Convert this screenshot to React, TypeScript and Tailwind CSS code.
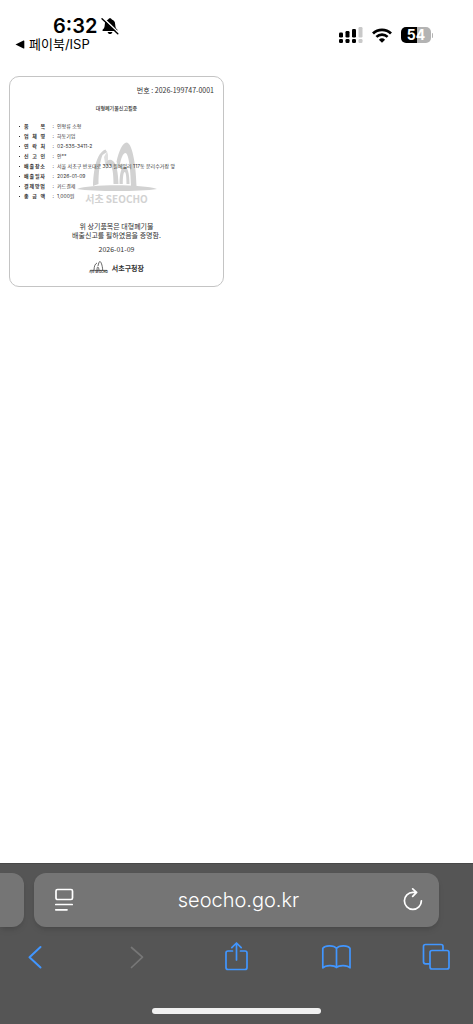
import type { ReactNode } from "react";

const FIELDS = [
  { label: ["품", "목"], value: "인형류 소형" },
  { label: ["업", "체", "명"], value: "하동기업" },
  { label: ["연", "락", "처"], value: "02-535-3411-2" },
  { label: ["신", "고", "인"], value: "안**" },
  { label: ["배", "출", "장", "소"], value: "서울 서초구 반포대로 333 원베일리 117동 분리수거장 앞" },
  { label: ["배", "출", "일", "자"], value: "2026-01-09" },
  { label: ["결", "제", "방", "법"], value: "카드결제" },
  { label: ["총", "금", "액"], value: "1,000원" },
];

function BellOff() {
  return (
    <svg viewBox="0 0 18 18" className="h-[18px] w-[18px]" aria-hidden="true">
      <path
        d="M9 1.200c1 0 1.600.6 1.800 1.400 2.200.6 3.300 2.400 3.400 4.800.1 2.800.8 3.900 2 5 .6.6.3 1.600-.6 1.600H2.400c-.9 0-1.200-1-.6-1.600 1.200-1.100 1.900-2.200 2-5 .1-2.400 1.200-4.200 3.400-4.800C7.400 1.800 8 1.200 9 1.200Z"
        fill="#000"
      />
      <path d="M6.600 15h4.800c-.2 1.300-1.200 2.100-2.400 2.100S6.800 16.300 6.600 15Z" fill="#000" />
      <path d="M2 .8 18 16" stroke="#fff" strokeWidth="1.600" />
      <path d="M1 1.800 16.800 16.800" stroke="#000" strokeWidth="1.400" strokeLinecap="round" />
    </svg>
  );
}

function Signal() {
  return (
    <svg viewBox="0 0 24 18" className="h-[18px] w-6" aria-hidden="true">
      <g fill="#000">
        <rect x="0" y="6.500" width="4" height="5" rx="1.200" />
        <rect x="6.500" y="5" width="4" height="6.500" rx="1.200" />
        <rect x="13" y="3" width="4" height="8.500" rx="1.200" />
        <rect x="0" y="13" width="4" height="4" rx="1.200" />
        <rect x="6.500" y="13" width="4" height="4" rx="1.200" />
        <rect x="13" y="13" width="4" height="4" rx="1.200" />
      </g>
      <g fill="#c9c9c9">
        <rect x="19.500" y="1" width="4" height="10.500" rx="1.200" />
        <rect x="19.500" y="13" width="4" height="4" rx="1.200" />
      </g>
    </svg>
  );
}

function Wifi() {
  return (
    <svg viewBox="0 0 20 15" className="h-[15px] w-5" fill="none" stroke="#000" aria-hidden="true">
      <path d="M1 5.400a13 13 0 0 1 18 0" strokeWidth="2.800" />
      <path d="M4.400 8.900a8 8 0 0 1 11.200 0" strokeWidth="2.600" />
      <path d="M10 14.800 6.900 11.700a4.500 4.500 0 0 1 6.200 0Z" fill="#000" stroke="none" />
    </svg>
  );
}

function Arches({ className }: { className: string }) {
  return (
    <svg viewBox="0 0 82 52" className={className} fill="currentColor" aria-hidden="true">
      <path d="M17 45C17.500 30 20 12 29.500 8.500L31 11 26.500 14C23.500 22 22.500 32 22.500 43Z" />
      <path d="M28 16 31 10.500 32 13.500V26L30 28Z" opacity=".7" />
      <path d="M29.500 24C30.500 19 34 17.500 37 20 41 23.500 42 32 42.500 43H37.500C37.500 33 36.500 25 34 23.500 32.500 22.500 31 23 29.500 24Z" />
      <path d="M40.500 21C42.500 11 46.500 1.500 50.500 1.500 56 1.500 60 22 60.500 45H55C54.500 27 52.500 12 49.500 12 47 12 45 17 43.500 26Z" />
      <path d="M43.500 43C43.500 32 45.500 25.500 48.500 25.500S53.500 32 53.500 43H50.500C50.500 36 50 31 48.700 31S46.800 36 46.800 43Z" />
      <path d="M1 48C14 43 66 43 81 48 64 50.800 18 50.800 1 48Z" />
    </svg>
  );
}

function SealArches() {
  return (
    <svg viewBox="0 0 17 10" className="h-[10px] w-[17px]" fill="none" stroke="#444" aria-hidden="true">
      <path d="M4 9C4.200 5 5 3 7 2M7 9c0-4 1.500-4 2 0M8 5c.6-3 1.200-4.500 2-4.500S12.400 4 12.700 9" strokeWidth=".8" />
      <path d="M0 9.400h17" strokeWidth=".8" />
    </svg>
  );
}

function BarButton({ label, disabled, children }: { label: string; disabled?: boolean; children: ReactNode }) {
  return (
    <button type="button" aria-label={label} disabled={disabled} className="flex h-8 w-[30px] items-center justify-center text-[#4196ff] disabled:text-[#777]">
      <svg viewBox="0 0 30 32" className="h-8 w-[30px] shrink-0" fill="none" stroke="currentColor" strokeWidth="1.700" strokeLinecap="round" strokeLinejoin="round" aria-hidden="true">
        {children}
      </svg>
    </button>
  );
}

function StatusBar() {
  return (
    <header className="flex items-start justify-between pt-4 pr-10 pl-[15px] font-['Inter','Noto_Sans_CJK_KR',sans-serif] text-black">
      <div>
        <div className="flex items-center gap-1 pl-[38px]">
          <span className="text-[20px] leading-5 font-semibold">6:32</span>
          <BellOff />
        </div>
        <a href="#back" className="flex items-center gap-1 text-[13px] leading-4">
          <svg viewBox="0 0 10 9" className="h-[9px] w-[10px]" aria-hidden="true">
            <path d="M.5 4.500 8.500.6q.8-.3.8.5v6.800q0 .8-.8.5Z" />
          </svg>
          페이북/ISP
        </a>
      </div>
      <div className="flex items-center gap-[9px] pt-[10px]">
        <Signal />
        <Wifi />
        <div className="flex items-center gap-px">
          <div className="flex h-4 w-[30px] items-center justify-center rounded-[5px] bg-linear-to-r from-black from-54% to-[#b3b3b3] to-54% text-[14px] leading-4 font-bold text-white">
            54
          </div>
          <div className="h-[5px] w-px rounded-r bg-[#b3b3b3]" />
        </div>
      </div>
    </header>
  );
}

function Certificate() {
  return (
    <article className="relative w-[215px] rounded-[10px] border border-[#c4c4c4] pt-2 pb-3 font-['Noto_Sans_CJK_KR',sans-serif] text-[#333]">
      <div className="absolute inset-x-0 top-16 flex flex-col items-center text-[#d2d2d2]">
        <Arches className="h-[52px] w-[82px]" />
        <span className="text-[10px] leading-3 font-bold">서초 SEOCHO</span>
      </div>
      <div className="relative">
        <p className="pr-[9px] text-right text-[7px] leading-[10px]">번호 : 2026-199747-0001</p>
        <h1 className="mt-2 text-center text-[5px] leading-[10px] font-medium">대형폐기물신고필증</h1>
        <dl className="mt-2 pl-[9px] font-['Inter','Noto_Sans_CJK_KR',sans-serif] text-[5px] leading-[10px]">
          {FIELDS.map(({ label, value }) => (
            <div key={label.join("")} className="flex items-center whitespace-nowrap">
              <span className="mr-1 size-px bg-[#333]" />
              <dt className="flex w-[21px] justify-between font-bold">
                {label.map((part) => (
                  <span key={part}>{part}</span>
                ))}
              </dt>
              <span className="w-3 pr-[3px] text-right">:</span>
              <dd>{value}</dd>
            </div>
          ))}
        </dl>
        <p className="mt-[21px] text-center text-[7px] leading-[9px]">
          위 상기품목은 대형폐기물
          <br />
          배출신고를 필하였음을 증명함.
        </p>
        <p className="mt-1 text-center text-[7px] leading-[10px]">2026-01-09</p>
        <div className="mt-[7px] flex items-center justify-center gap-1">
          <div className="flex flex-col items-center">
            <SealArches />
            <span className="text-[3px] leading-[3px] font-bold">서초 SEOCHO</span>
          </div>
          <strong className="text-[7px] leading-[10px] font-bold">서초구청장</strong>
        </div>
      </div>
    </article>
  );
}

function BrowserBar() {
  return (
    <footer className="border-t border-[#484848] bg-[#555] pt-[9px] pb-[10px] font-['Inter','Noto_Sans_CJK_KR',sans-serif]">
      <div className="flex gap-[10px] pr-[34px]">
        <button type="button" aria-label="이전 탭" className="h-[54px] w-6 rounded-r-xl bg-[#757575] shadow-md" />
        <div className="flex h-[54px] flex-1 items-center justify-between rounded-xl bg-[#757575] pr-4 pl-5 text-white shadow-md">
          <button type="button" aria-label="페이지 메뉴">
            <svg viewBox="0 0 20 24" className="h-6 w-5" fill="none" stroke="currentColor" strokeWidth="1.700" strokeLinecap="round" aria-hidden="true">
              <rect x="2" y="1.500" width="16.500" height="10" rx="1.500" />
              <path d="M1.800 16.500h16.400M1.800 21.800h11.200" />
            </svg>
          </button>
          <button type="button" className="text-[20px] leading-6 font-light">
            seocho.go.kr
          </button>
          <button type="button" aria-label="새로 고침">
            <svg viewBox="0 0 20 24" className="h-6 w-5" fill="none" stroke="currentColor" strokeWidth="1.700" strokeLinecap="round" strokeLinejoin="round" aria-hidden="true">
              <path d="M18.400 12.800a8.500 8.500 0 1 1-8.500-8.500h3.600M9.700.9l3.900 3.500-3.900 4" />
            </svg>
          </button>
        </div>
      </div>
      <nav className="mt-[14px] flex justify-between pr-[22px] pl-5">
        <BarButton label="뒤로">
          <path d="M20.500 6 9.500 16.200l11 10.300" strokeWidth="2" />
        </BarButton>
        <BarButton label="앞으로" disabled>
          <path d="M11.500 6.500 22.500 16.200 11.500 26.500" />
        </BarButton>
        <BarButton label="공유">
          <path d="M11.500 10H7q-2 0-2 2v14.500q0 2 2 2h17q2 0 2-2V12q0-2-2-2h-4.500M15.500 19V2M10.800 6.700 15.500 2l4.700 4.700" />
        </BarButton>
        <BarButton label="책갈피">
          <path d="M15.500 7.500C13 4.300 4.500 4 1.800 7.200v19.600C4.500 24 13 23.800 15.500 26.500 18 23.800 26.500 24 29 26.800V7.200C26.500 4 18 4.300 15.500 7.500Zm0 0v19" />
        </BarButton>
        <BarButton label="탭 보기">
          <path d="M8.500 22.800H4.500q-2 0-2-2V5.500q0-2 2-2h15.500q2 0 2 2V8.500" />
          <rect x="9" y="9.500" width="19" height="18.500" rx="2" />
        </BarButton>
      </nav>
      <div className="mx-auto mt-[35px] h-[6px] w-[169px] rounded-full bg-[#f0f0f0]" />
    </footer>
  );
}

export default function App() {
  return (
    <div className="flex min-h-screen flex-col bg-white">
      <StatusBar />
      <main className="flex-1 px-[9px] pt-6">
        <Certificate />
      </main>
      <BrowserBar />
    </div>
  );
}
